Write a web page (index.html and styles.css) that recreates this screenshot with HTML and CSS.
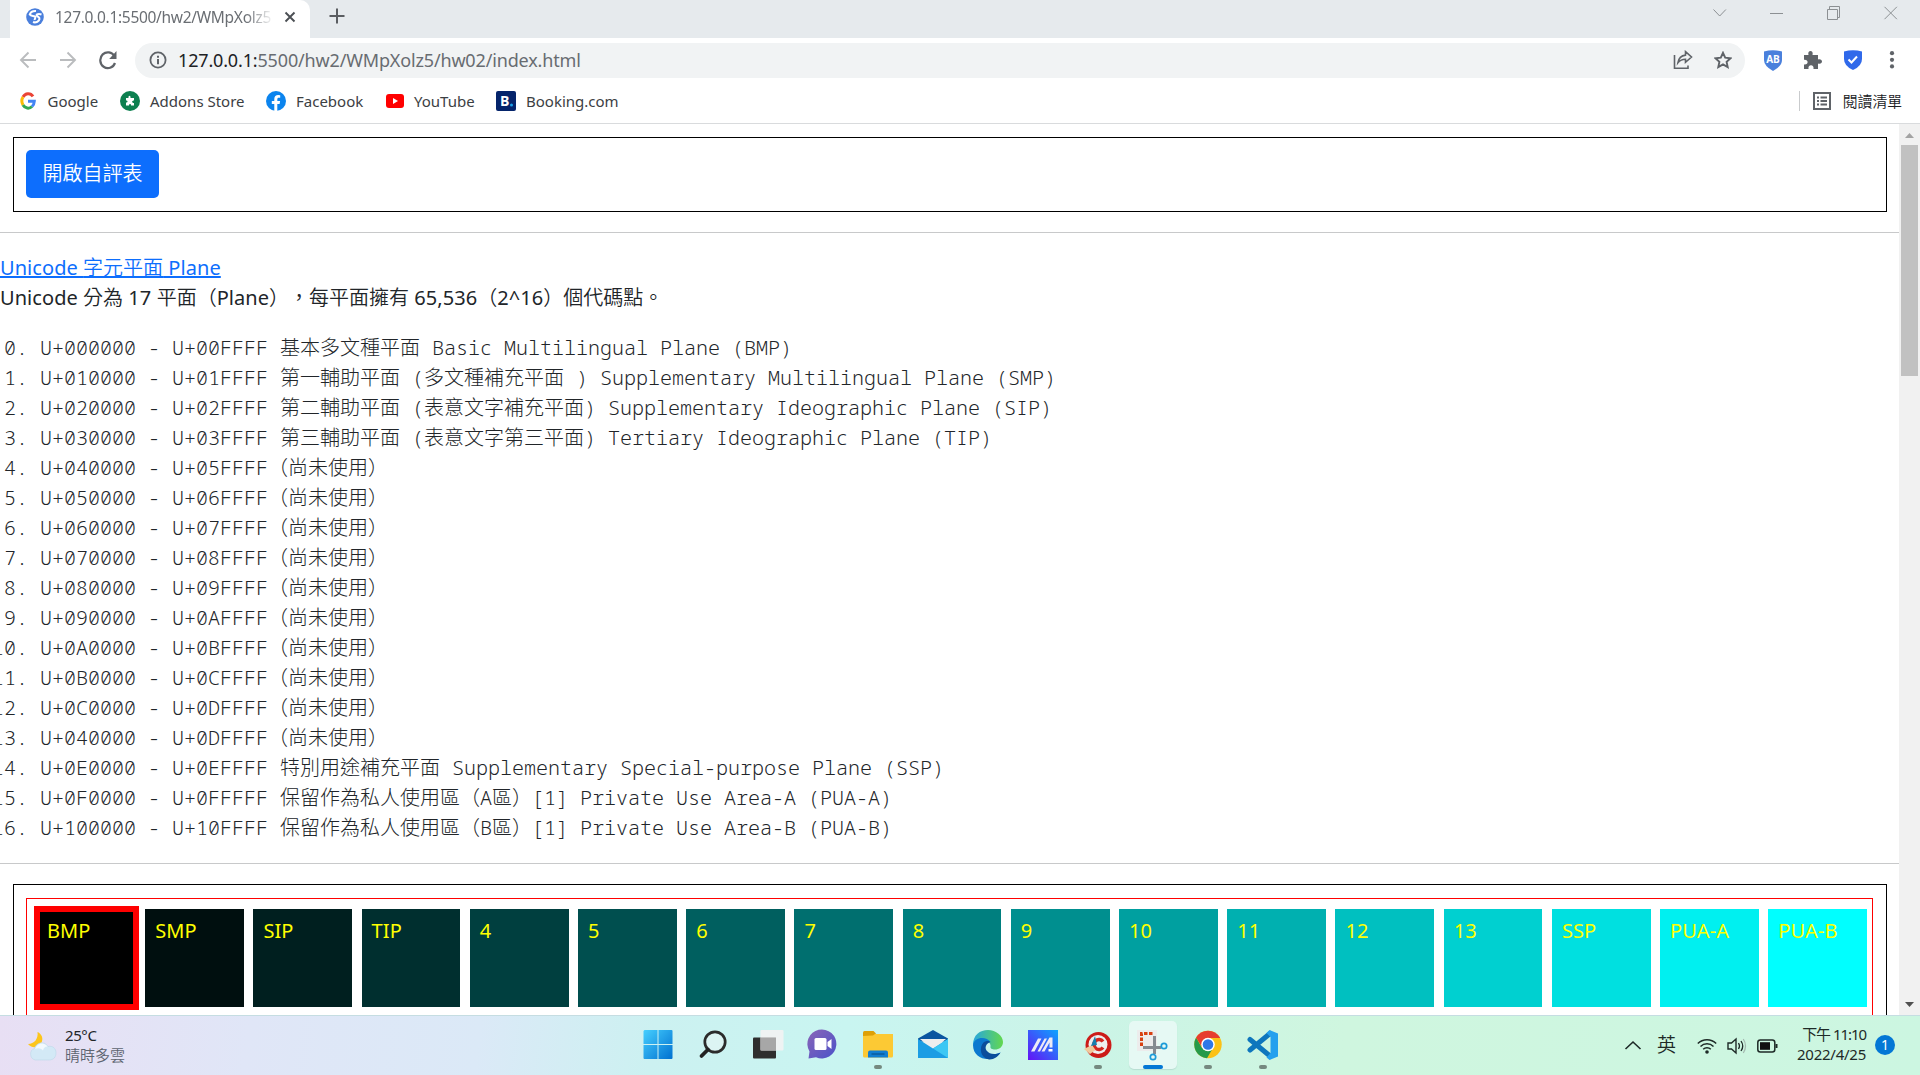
FILE: index.html
```html
<!DOCTYPE html>
<html lang="zh-Hant">
<head>
<meta charset="utf-8">
<title>hw02</title>
<link rel="stylesheet" href="styles.css">
</head>
<body>
<div class="screen">
  <header class="tabstrip">
    <div class="tab">
      <svg class="globe" width="18" height="18" viewBox="0 0 18 18"><circle cx="9" cy="9" r="8.800" fill="#4a7fdc"/><path d="M10 3C7 2.800 4.500 4 3.800 6.500 5 8.500 7.500 7.500 9 8.500c1.200 1-.5 2-.3 3.500M15.500 6.500c-2-.7-3.800-.5-4.800.2-.5 1.300.6 1.600 1.600 2.200 2 1.300 1.300 3.600-1 4.800-1.500.7-3 .8-4.300.3" fill="none" stroke="#fff" stroke-width="2.100"/></svg>
      <span class="tab-title">127.0.0.1:5500/hw2/WMpXolz5</span>
      <svg width="12" height="12" viewBox="0 0 12 12"><path d="M1.500 1.500l9 9m0-9l-9 9" stroke="#4b4f54" stroke-width="1.900"/></svg>
    </div>
    <svg class="newtab" width="16" height="16" viewBox="0 0 16 16"><path d="M8 .5v15M.5 8h15" stroke="#5a5d61" stroke-width="2"/></svg>
    <div class="winctl">
      <svg width="57" height="14" viewBox="0 0 57 14"><path d="M22.500 3.500l6.200 6.500 6.200-6.500" fill="none" stroke="#8c9093"/></svg>
      <svg width="57" height="14" viewBox="0 0 57 14"><path d="M22 7.500h13" stroke="#8c9093"/></svg>
      <svg width="57" height="14" viewBox="0 0 57 14"><path d="M22.500 3.500h10v10h-10zM24.500 3v-2.500h10v11h-2" fill="none" stroke="#8c9093"/></svg>
      <svg width="57" height="14" viewBox="0 0 57 14"><path d="M22.500 .8l12.400 12.400m0-12.400l-12.400 12.400" stroke="#8c9093"/></svg>
    </div>
  </header>

  <div class="toolbar">
    <svg width="18" height="18" viewBox="0 0 18 18"><path d="M17 9H2m7.500-7.500L2 9l7.500 7.500" fill="none" stroke="#babcbe" stroke-width="1.900"/></svg>
    <svg width="18" height="18" viewBox="0 0 18 18"><path d="M1 9h15m-7.500-7.500L16 9l-7.500 7.500" fill="none" stroke="#babcbe" stroke-width="1.900"/></svg>
    <svg width="18" height="20" viewBox="0 0 18 20"><path d="M15.500 6.300A7.600 7.900 0 1 0 16 13" fill="none" stroke="#5f6368" stroke-width="2.200"/><path d="M17.500 1v8h-7.300z" fill="#5f6368"/></svg>
    <div class="omnibox">
      <svg width="18" height="18" viewBox="0 0 18 18"><circle cx="9" cy="9" r="7.600" fill="none" stroke="#5f6368" stroke-width="1.800"/><path d="M9 8v5.200M9 4.700v2" stroke="#5f6368" stroke-width="2"/></svg>
      <span class="url"><b>127.0.0.1:</b>5500/hw2/WMpXolz5/hw02/index.html</span>
      <svg class="share" width="20" height="20" viewBox="0 0 20 20"><path d="M1.500 5v13.200h13.500v-2.700M12.500 1.700l6 5.300-6 5.300V9.200c-3.300 0-5.500 1-7.600 3.600.7-4.200 3.300-7.300 7.600-7.700z" fill="none" stroke="#5f6368" stroke-width="1.600"/></svg>
      <svg width="18" height="18" viewBox="0 0 18 18"><path d="M9 1.800l2.200 4.900 5.300.6-3.900 3.600 1.100 5.200L9 13.400l-4.700 2.700 1.100-5.200-3.900-3.600 5.300-.6z" fill="none" stroke="#5f6368" stroke-width="1.900"/></svg>
    </div>
    <div class="exts">
      <svg width="20" height="21" viewBox="0 0 20 21"><path d="M1 1.500Q10-1 19 1.500V10q0 6-9 11-9-5-9-11z" fill="#4a80dc"/><text x="10" y="13" text-anchor="middle" class="ab">AB</text></svg>
      <svg width="20" height="20" viewBox="0 0 20 20"><path d="M1 5h4.500C4.700 2.500 6 1 7.500 1S10.300 2.500 9.500 5H15v4.500c2.500-.8 4 .5 4 2s-1.500 2.800-4 2V19h-4.500c.4-2.500-.8-3.700-2.500-3.700S5.100 16.500 5.500 19H1v-4.500c2.500.3 3.600-.8 3.600-2.400S3.500 9.500 1 9.700z" fill="#5f6368"/></svg>
      <svg width="20" height="20" viewBox="0 0 20 20"><path d="M1 1.500Q10-1 19 1.500V9q0 7-9 11-9-4-9-11z" fill="#3069ea"/><path d="M5.500 9.500l3 3 5.500-6" fill="none" stroke="#fff" stroke-width="2"/></svg>
      <svg class="dots" width="6" height="18" viewBox="0 0 6 18"><g fill="#5f6368"><circle cx="3" cy="2.200" r="2.100"/><circle cx="3" cy="8.800" r="2.100"/><circle cx="3" cy="15.400" r="2.100"/></g></svg>
    </div>
  </div>

  <nav class="bookmarks">
    <span class="bm w1"><svg width="16" height="20" viewBox="0 0 16 20"><g fill="none" stroke-width="3"><path d="M13 5.400A6 6.800 0 0 0 3 6" stroke="#ea4335"/><path d="M3 6a7 7.500 0 0 0 0 8" stroke="#fbbc05"/><path d="M3 14a6 6.800 0 0 0 9 1.500" stroke="#34a853"/><path d="M12 15.500a6 7 0 0 0 2.300-5.200H8" stroke="#4285f4"/></g></svg><i>Google</i></span>
    <span class="bm w2"><svg width="20" height="20" viewBox="0 0 20 20"><circle cx="10" cy="10" r="10" fill="#0d8050"/><path d="M6 7h2.500c-.4-3 2.400-3 2 0H14v2.500c-2.500 0-2.500 2.500 0 2.500v2.500h-3c.2-2-2-2-2 0H6v-3c2.200 0 2-2 0-2z" fill="#fff"/></svg><i>Addons Store</i></span>
    <span class="bm w3"><svg width="20" height="20" viewBox="0 0 20 20"><circle cx="10" cy="10" r="10" fill="#0b84ee"/><path d="M8.300 20v-7H5.800v-3h2.500V8c0-2.700 1.500-4 3.900-4l2 .2v2.500h-1.300c-1.200 0-1.600.7-1.600 1.500V10h2.800l-.5 3h-2.300v7z" fill="#fff"/></svg><i>Facebook</i></span>
    <span class="bm w4"><svg width="18" height="20" viewBox="0 0 18 20"><rect y="3" width="18" height="14" rx="3" fill="#f00"/><path d="M7 7v6l5-3z" fill="#fff"/></svg><i>YouTube</i></span>
    <span class="bm w5"><svg width="20" height="20" viewBox="0 0 20 20"><rect width="20" height="20" rx="2" fill="#05246b"/><text x="4" y="15" class="bk">B</text><circle cx="15.500" cy="14" r="1.500" fill="#1ba2e8"/></svg><i>Booking.com</i></span>
    <span class="readlist"><svg width="18" height="18" viewBox="0 0 18 18"><path d="M1 1h16v16H1z" fill="none" stroke="#5f6368" stroke-width="2"/><path d="M4 5.500h2m1.500 0h6.500M4 9h2m1.500 0h6.500M4 12.500h2m1.500 0h6.500" stroke="#5f6368" stroke-width="1.800"/></svg>閱讀清單</span>
  </nav>

  <div class="viewport">
    <main class="page">
      <div class="box"><button class="btn">開啟自評表</button></div>
      <hr>
      <p class="intro"><a href="#"><span class="lt">Unicode </span>字元平面<span class="lt"> Plane</span></a><br><span class="lt">Unicode </span>分為<span class="lt"> 17 </span>平面（<span class="lt">Plane</span>），每平面擁有<span class="lt"> 65,536</span>（<span class="lt">2^16</span>）個代碼點。</p>
      <ol start="0" class="planes">
        <li>U+000000 - U+00FFFF 基本多文種平面 Basic Multilingual Plane (BMP)</li>
        <li>U+010000 - U+01FFFF 第一輔助平面 (多文種補充平面 ) Supplementary Multilingual Plane (SMP)</li>
        <li>U+020000 - U+02FFFF 第二輔助平面 (表意文字補充平面) Supplementary Ideographic Plane (SIP)</li>
        <li>U+030000 - U+03FFFF 第三輔助平面 (表意文字第三平面) Tertiary Ideographic Plane (TIP)</li>
        <li>U+040000 - U+05FFFF（尚未使用）</li>
        <li>U+050000 - U+06FFFF（尚未使用）</li>
        <li>U+060000 - U+07FFFF（尚未使用）</li>
        <li>U+070000 - U+08FFFF（尚未使用）</li>
        <li>U+080000 - U+09FFFF（尚未使用）</li>
        <li>U+090000 - U+0AFFFF（尚未使用）</li>
        <li>U+0A0000 - U+0BFFFF（尚未使用）</li>
        <li>U+0B0000 - U+0CFFFF（尚未使用）</li>
        <li>U+0C0000 - U+0DFFFF（尚未使用）</li>
        <li>U+040000 - U+0DFFFF（尚未使用）</li>
        <li>U+0E0000 - U+0EFFFF 特別用途補充平面 Supplementary Special-purpose Plane (SSP)</li>
        <li>U+0F0000 - U+0FFFFF 保留作為私人使用區（A區）[1] Private Use Area-A (PUA-A)</li>
        <li>U+100000 - U+10FFFF 保留作為私人使用區（B區）[1] Private Use Area-B (PUA-B)</li>
      </ol>
      <hr>
      <div class="box maps">
        <div class="grid">
          <div class="cell active" style="background:#000000">BMP</div>
          <div class="cell" style="background:#000f0f">SMP</div>
          <div class="cell" style="background:#001f1f">SIP</div>
          <div class="cell" style="background:#002f2f">TIP</div>
          <div class="cell" style="background:#003f3f">4</div>
          <div class="cell" style="background:#004f4f">5</div>
          <div class="cell" style="background:#005f5f">6</div>
          <div class="cell" style="background:#006f6f">7</div>
          <div class="cell" style="background:#007f7f">8</div>
          <div class="cell" style="background:#008f8f">9</div>
          <div class="cell" style="background:#00a0a0">10</div>
          <div class="cell" style="background:#00b0b0">11</div>
          <div class="cell" style="background:#00c0c0">12</div>
          <div class="cell" style="background:#00d0d0">13</div>
          <div class="cell" style="background:#00e0e0">SSP</div>
          <div class="cell" style="background:#00f0f0">PUA-A</div>
          <div class="cell" style="background:#00ffff">PUA-B</div>
        </div>
      </div>
    </main>
    <div class="scrollbar">
      <svg width="21" height="21" viewBox="0 0 21 21"><path d="M6 14l4.500-5 4.500 5z" fill="#a3a3a3"/></svg>
      <div class="thumb"></div>
      <svg class="down" width="21" height="21" viewBox="0 0 21 21"><path d="M6 8l4.500 5L15 8z" fill="#505050"/></svg>
    </div>
  </div>

  <footer class="taskbar">
    <div class="weather">
      <svg width="30" height="30" viewBox="0 0 30 30"><path d="M10.500 1c4.500 2 6 6.500 4 10.500-2 4.500-8.500 7-13.500 1.500C7 13 11.500 8 10.500 1z" fill="#fcc51c"/><path d="M8.500 29a6 6 0 0 1-1-11.500C9 12 17 9 21 15.500c5-1 8 2 8 6.500 0 4-2.500 7-7 7z" fill="#d3e9f6" stroke="#bcd8ea" stroke-width=".6"/><path d="M8 18c2-6 9-7.500 12.500-2.500-3 0-4 2-4.500 4-2-2.500-5-3-8-1.500z" fill="#f2f9fd"/></svg>
      <div class="wtext"><div>25°C</div><div class="wsub">晴時多雲</div></div>
    </div>
    <div class="apps">
      <div class="app"><svg width="32" height="32" viewBox="0 0 32 32"><defs><linearGradient id="win" gradientUnits="userSpaceOnUse" x1="1" y1="1" x2="31" y2="30"><stop offset="0" stop-color="#46d0ff"/><stop offset="1" stop-color="#0070d0"/></linearGradient></defs><path d="M2.500 1H15.500v14H1.500V2zM16.500 1h13q1 0 1 1v13h-14zM1.500 16H15.500V30H2.500q-1 0-1-1zM16.500 16h14V29q0 1-1 1h-13z" fill="url(#win)"/></svg></div>
      <div class="app"><svg width="32" height="32" viewBox="0 0 32 32"><circle cx="18" cy="13" r="10.200" fill="#dcf4f3" stroke="#2b2b2b" stroke-width="2.700"/><path d="M11 20.500L4.500 27" stroke="#222" stroke-width="3.800" stroke-linecap="round"/></svg></div>
      <div class="app"><svg width="32" height="32" viewBox="0 0 32 32"><rect x="1" y="8.500" width="23" height="21" rx="1" fill="#2e2e2e"/><rect x="8.500" y="1" width="23" height="20.500" rx="1" fill="#f3f3f3" opacity=".9"/><path d="M8.500 8.500H24v13H8.500z" fill="#a7a7a7"/></svg></div>
      <div class="app"><svg width="32" height="32" viewBox="0 0 32 32"><defs><linearGradient id="cht" x1="0" y1="0" x2="1" y2="1"><stop offset="0" stop-color="#8a65b7"/><stop offset="1" stop-color="#4b52c9"/></linearGradient></defs><path d="M1.500 29.500l1-7A14.500 14.500 0 1 1 9 28.200z" fill="url(#cht)"/><rect x="7.500" y="9" width="12" height="12" rx="1.500" fill="#fff"/><path d="M20.500 13l4-3v10l-4-3z" fill="#fff"/></svg></div>
      <div class="app run"><svg width="32" height="32" viewBox="0 0 32 32"><path d="M1 3.500q0-1.500 1.500-1.500h9L14 4.500v5H1z" fill="#dea007"/><path d="M1 7l10-.5 2-1.500h18v22q0 1.500-1.500 1.500h-27Q1 28.500 1 27z" fill="#fcc934"/><path d="M6 28.500v-5q0-2 2-2h16q2 0 2 2v5z" fill="#117ed0"/><path d="M9.500 25h13" stroke="#064b84"/></svg></div>
      <div class="app"><svg width="32" height="32" viewBox="0 0 32 32"><path d="M1 9.500L16 1l15 8.500v3H1z" fill="#0b55a0"/><path d="M3 10h26L16 21z" fill="#eee"/><path d="M1 10l15 9.500L31 10v19H1z" fill="#1b9de4"/><path d="M16 19.500L31 10v19z" fill="#3cc7f4"/></svg></div>
      <div class="app"><svg width="32" height="32" viewBox="0 0 32 32"><defs><linearGradient id="edg"><stop offset="0" stop-color="#28a6df"/><stop offset="1" stop-color="#63d84e"/></linearGradient></defs><path d="M1 16C1 6 8 1 16 1s15 6 15 12c0 5-4 7.500-8 7.500-3 0-5-1-4.500-3 1-5-9-11-17.500-1.500z" fill="url(#edg)"/><path d="M1 16C2 8 14 6.500 18.500 13c-8-1-8.500 7-4 10.500 4.500 3.500 10 1.500 14 0C22 34 1 32 1 16z" fill="#0b78cf"/><path d="M11.500 13.500C7 18 8 29 17 30.500c5 .3 9-3 11.500-7-5 2.500-11 2-14-2-2-3-.5-7 4-8.500-2-1.500-5-1-7 .5z" fill="#0b4d9b"/></svg></div>
      <div class="app"><svg width="32" height="32" viewBox="0 0 32 32"><defs><linearGradient id="ma" x1="0" y1="1" x2="1" y2="0"><stop offset="0" stop-color="#6512f5"/><stop offset="1" stop-color="#0ba5ff"/></linearGradient></defs><path d="M1 1h30v30H1z" fill="url(#ma)"/><path d="M4 22.500L11 9.500h3.500L7.500 22.500zM10.500 22.500L17.500 9.500h2.500L13 22.500zM14.500 22.500L22.500 8.500h3V18.500h-3v-5L17.500 22.500z" fill="#eceaf6"/><rect x="21.500" y="20" width="4" height="2.500" fill="#fff"/></svg></div>
      <div class="app run"><svg width="32" height="32" viewBox="0 0 32 32"><circle cx="16.500" cy="16" r="13" fill="#cc1b18"/><circle cx="16" cy="15.500" r="9.500" fill="#eee"/><path d="M21 12.500a5 5 0 1 0 0 6" fill="none" stroke="#d4271f" stroke-width="3.500"/><path d="M2 20l8-4 3.500 5-5.500 4z" fill="#f0c99c"/><path d="M9 17l4-10 2 9z" fill="#187fae"/></svg></div>
      <div class="app active"><svg width="32" height="32" viewBox="0 0 32 32"><path d="M0 1h20v21H0z" fill="#ececec"/><path d="M4.500 17V4.500H16" fill="none" stroke="#d84012" stroke-width="3" stroke-dasharray="3.500 1.500"/><path d="M17.500 7v18M6 18.500h18" stroke="#858b91" stroke-width="3"/><circle cx="27" cy="17" r="2.700" fill="none" stroke="#1b9bd8" stroke-width="1.700"/><circle cx="16" cy="28" r="2.700" fill="none" stroke="#1b9bd8" stroke-width="1.700"/></svg></div>
      <div class="app run"><svg width="32" height="32" viewBox="0 0 32 32"><circle cx="16" cy="15.500" r="13.700" fill="#fbc116"/><path d="M4.100 8.600A13.700 13.700 0 0 1 27.900 8.600L28 9H16z" fill="#e63d30"/><path d="M4.100 8.600A13.700 13.700 0 0 0 15 29.200l5.500-9.500L10 19z" fill="#269a4a"/><path d="M4.100 8.600L10.500 19 16 9 27.900 9Q16 .5 4.100 8.600z" fill="#e63d30"/><circle cx="16" cy="15.500" r="6.800" fill="#fff"/><circle cx="16" cy="15.500" r="5.300" fill="#2f77e7"/></svg></div>
      <div class="app run"><svg width="32" height="32" viewBox="0 0 32 32"><path d="M3 10.500L23 27M3 21L23 4.500" stroke="#0e76bd" stroke-width="5" stroke-linecap="round"/><path d="M22.500 1L31 4.500v23L22.500 31l-3-2.500L23.500 24V8l-4-4z" fill="#24a0ee"/></svg></div>
    </div>
    <div class="tray">
      <svg width="18" height="18" viewBox="0 0 18 18"><path d="M1.500 12L9 5l7.500 7" fill="none" stroke="#1e2a27" stroke-width="1.600"/></svg>
      <span class="ime">英</span>
      <svg class="wifi" width="20" height="18" viewBox="0 0 20 18"><path d="M.8 6.500a13 13 0 0 1 18.400 0M3.500 9.500a9.300 9.300 0 0 1 13 0M6.200 12.300a5.300 5.300 0 0 1 7.600 0" fill="none" stroke="#1e2a27" stroke-width="1.500"/><circle cx="10" cy="15" r="1.800" fill="#1e2a27"/></svg>
      <svg class="vol" width="20" height="18" viewBox="0 0 20 18"><path d="M1 6h3.500L9 2v14l-4.500-4H1z" fill="none" stroke="#1e2a27" stroke-width="1.400"/><path d="M11.500 6q2 3 0 6M14 4q3.500 5 0 10" fill="none" stroke="#1e2a27" stroke-width="1.300"/><path d="M16.300 2q4.500 7 0 14" fill="none" stroke="#a5b9b0" stroke-width="1.200"/></svg>
      <svg class="bat" width="21" height="14" viewBox="0 0 21 14"><rect x=".8" y="1" width="17" height="12" rx="2.500" fill="none" stroke="#1e2a27" stroke-width="1.500"/><rect x="3" y="3.200" width="10" height="7.600" fill="#111"/><path d="M19.500 5v4" stroke="#1e2a27" stroke-width="2"/></svg>
      <div class="clock"><div class="time">下午 11:10</div><div>2022/4/25</div></div>
      <span class="badge">1</span>
    </div>
  </footer>
</div>
</body>
</html>
```
FILE: styles.css
```css
* { box-sizing: border-box; }
body { margin: 0; background: #fff; overflow: hidden; font-family: "Noto Sans", "Noto Sans CJK TC", sans-serif; font-weight: 400; color: #212529; text-spacing-trim: space-all; }
svg { display: block; flex: none; }
.screen { width: 1920px; height: 1075px; display: flex; flex-direction: column; overflow: hidden; }

.tabstrip { height: 38px; flex: none; background: #e6eaed; display: flex; padding-left: 10px; }
.tab { width: 300px; background: #fff; border-radius: 0 10px 0 0; display: flex; align-items: center; padding: 0 14px 5px 16px; }
.tab-title { margin-left: 11px; width: 219px; margin-right: 10px; font-size: 15.500px; letter-spacing: -.3px; color: #6a6e73; white-space: nowrap; overflow: hidden; -webkit-mask-image: linear-gradient(90deg, #000 87%, transparent); }
.newtab { margin: 8px 0 0 19px; }
.winctl { margin-left: auto; display: flex; padding: 6px 1px 0 0; }

.toolbar { height: 44px; flex: none; display: flex; align-items: center; padding: 0 25px 0 19px; }
.toolbar > svg + svg { margin-left: 22px; }
.omnibox { margin-left: 18px; width: 1610px; height: 35px; border-radius: 18px; background: #f1f3f4; display: flex; align-items: center; padding: 0 13px 0 14px; }
.url { margin-left: 11px; font-size: 18px; letter-spacing: -.16px; color: #686c71; white-space: nowrap; }
.url b { font-weight: 400; color: #202124; }
.share { margin-left: auto; margin-right: 21px; }
.exts { flex: 1; display: flex; align-items: center; gap: 20px; padding-left: 18px; }
.dots { margin-left: auto; }
.ab { font: 700 10px "Open Sans", sans-serif; fill: #fff; }
.bk { font: 700 14px "Open Sans", sans-serif; fill: #fff; }

.bookmarks { height: 42px; flex: none; border-bottom: 1px solid #d9dbdd; display: flex; align-items: center; padding: 0 18px 4px 20px; font-size: 15px; color: #3c4043; }
.bm { display: flex; align-items: center; gap: 10px; white-space: nowrap; }
.bm i { font-style: normal; letter-spacing: 0; }
.w1 { width: 100px; gap: 11.500px; }
.w2 { width: 146px; }
.w3 { width: 120px; }
.w4 { width: 110px; }
.readlist { margin-left: auto; height: 20px; border-left: 1px solid #c9cbcd; padding-left: 13px; display: flex; align-items: center; gap: 12px; font-size: 14.800px; font-weight: 350; color: #202124; }

.viewport { height: 891px; flex: none; display: flex; }
.page { width: 1899px; height: 891px; overflow: hidden; padding-top: 13px; font-size: 20px; line-height: 30px; }
.box { border: 1px solid #000; margin: 0 12px 0 13px; height: 75px; padding: 12px; }
.btn { display: block; width: 133px; height: 48px; border: 0; border-radius: 5px; padding: 0 0 4px; background: #0d6efd; color: #fff; font: 350 20px "Noto Sans CJK TC", sans-serif; }
hr { margin: 20px 0; border: 0; height: 1px; background: #c8c9ca; }
.intro { margin: 0 0 20px; white-space: nowrap; font-weight: 350; }
.intro a { color: #0d6efd; }
.lt { font-weight: 400; letter-spacing: .06px; }
.planes { margin: 0; padding-left: 40px; height: 510px; font-family: "Noto Sans Mono", "Liberation Mono", "Noto Sans CJK TC", monospace; font-weight: 300; color: #212529; }
.planes li { height: 30px; white-space: nowrap; }
.maps { height: 200px; padding: 13px 13px 0 12px; }
.grid { border: 1px solid #f00; height: 180px; display: grid; grid-template-columns: repeat(17, 1fr); column-gap: 9.500px; padding: 10px 5px 0 10px; }
.cell { height: 98px; color: #ff0; padding: 7px 0 0 10px; font-size: 20px; letter-spacing: .1px; white-space: nowrap; }
.cell.active { outline: 6px solid #f00; outline-offset: -3px; }

.scrollbar { width: 21px; background: #f1f1f1; display: flex; flex-direction: column; }
.thumb { width: 17px; height: 231px; margin-left: 2px; background: #c1c1c1; }
.down { margin-top: auto; }

.taskbar { height: 60px; flex: none; border-top: 1px solid #c5dde2; display: flex; align-items: center; background: linear-gradient(97deg, #e8dff4 0, #e0e6f7 13%, #dbe9f7 25%, #ccf1f1 34%, #c9f5f1 44%, #cbf4e7 56%, #cff6df 70%, #ccf6e1 100%); }
.weather { width: 634px; display: flex; padding-left: 27px; gap: 8px; align-items: center; }
.wtext { font-size: 15px; line-height: 20px; letter-spacing: -.4px; padding-bottom: 2px; }
.wsub { color: #5d6470; letter-spacing: 0; font-weight: 350; }
.apps { display: flex; gap: 7px; height: 60px; padding-top: 5px; }
.app { width: 48px; height: 48px; display: flex; flex-direction: column; align-items: center; padding-top: 8px; border-radius: 5px; }
.app.run::after { content: ""; width: 8px; height: 4px; border-radius: 2px; background: #75897f; margin-top: 4px; }
.app.active { background: #e6f9f4; box-shadow: 0 1px 1px #b9ddd2; }
.app.active::after { content: ""; width: 20px; height: 4px; border-radius: 2px; background: #0377d5; margin-top: 4px; }
.tray { margin-left: auto; display: flex; align-items: center; padding-right: 25px; color: #1e2a27; }
.ime { font-size: 19px; margin-left: 15px; line-height: 24px; padding-bottom: 2px; font-weight: 350; }
.wifi { margin-left: 21px; }
.vol { margin-left: 10px; }
.bat { margin-left: 10px; }
.clock { width: 88px; text-align: right; font-size: 15px; line-height: 20px; letter-spacing: -.25px; margin-right: 9px; padding-bottom: 4px; white-space: nowrap; }
.time { letter-spacing: -1.050px; }
.badge { width: 20px; height: 20px; border-radius: 50%; background: #0377d5; color: #fff; font-size: 14px; line-height: 20px; text-align: center; margin-bottom: 1px; }
```
